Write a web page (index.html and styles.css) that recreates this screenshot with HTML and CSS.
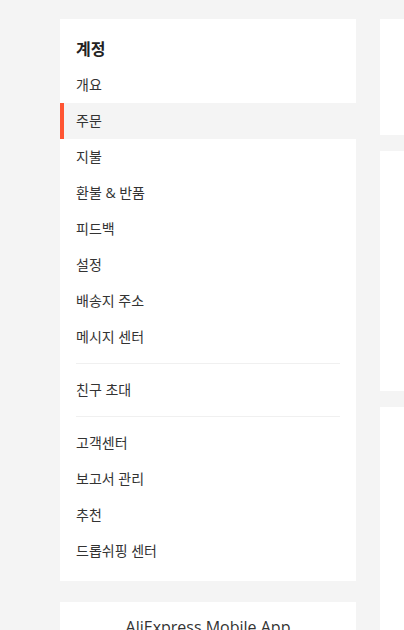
FILE: index.html
```html
<!DOCTYPE html>
<html lang="ko">
<head>
<meta charset="utf-8">
<link rel="stylesheet" href="styles.css">
</head>
<body>
<div class="page">
  <aside class="side">
    <nav class="card menu">
      <div class="menu-title">계정</div>
      <a class="item">개요</a>
      <a class="item active">주문</a>
      <a class="item">지불</a>
      <a class="item">환불 &amp; 반품</a>
      <a class="item">피드백</a>
      <a class="item">설정</a>
      <a class="item">배송지 주소</a>
      <a class="item">메시지 센터</a>
      <div class="divider"></div>
      <a class="item">친구 초대</a>
      <div class="divider"></div>
      <a class="item">고객센터</a>
      <a class="item">보고서 관리</a>
      <a class="item">추천</a>
      <a class="item">드롭쉬핑 센터</a>
    </nav>
    <div class="card app">AliExpress Mobile App</div>
  </aside>
  <main class="main">
    <div class="card box1"></div>
    <div class="card box2"></div>
    <div class="card box3"></div>
  </main>
</div>
</body>
</html>
```
FILE: styles.css
```css
html, body {
  margin: 0;
  padding: 0;
  background: #f4f4f4;
  font-family: "Open Sans", "Noto Sans CJK KR", sans-serif;
  color: #333;
  overflow: hidden;
}
.page {
  display: flex;
  gap: 24px;
  padding: 19px 0 0 60px;
}
.side {
  width: 296px;
  flex: none;
  display: flex;
  flex-direction: column;
  gap: 21px;
}
.card {
  background: #fff;
}
.menu {
  display: flex;
  flex-direction: column;
  padding: 12px 0;
}
.menu-title {
  padding: 0 16px;
  height: 36px;
  line-height: 36px;
  font-size: 16px;
  font-weight: 700;
  color: #222;
}
.item {
  display: block;
  height: 36px;
  line-height: 36px;
  padding: 0 16px;
  font-size: 14px;
  color: #333;
  text-decoration: none;
}
.item.active {
  background: #f4f4f4;
  box-shadow: inset 4px 0 0 #ff5533;
}
.divider {
  height: 1px;
  background: #f0f0f0;
  margin: 8px 16px;
}
.app {
  height: 60px;
  text-align: center;
  font-size: 16px;
  padding-top: 14px;
  color: #333;
}
.main {
  flex: 1;
  display: flex;
  flex-direction: column;
  gap: 16px;
  min-width: 300px;
}
.box1 { height: 116px; }
.box2 { height: 240px; }
.box3 { height: 300px; }
```
